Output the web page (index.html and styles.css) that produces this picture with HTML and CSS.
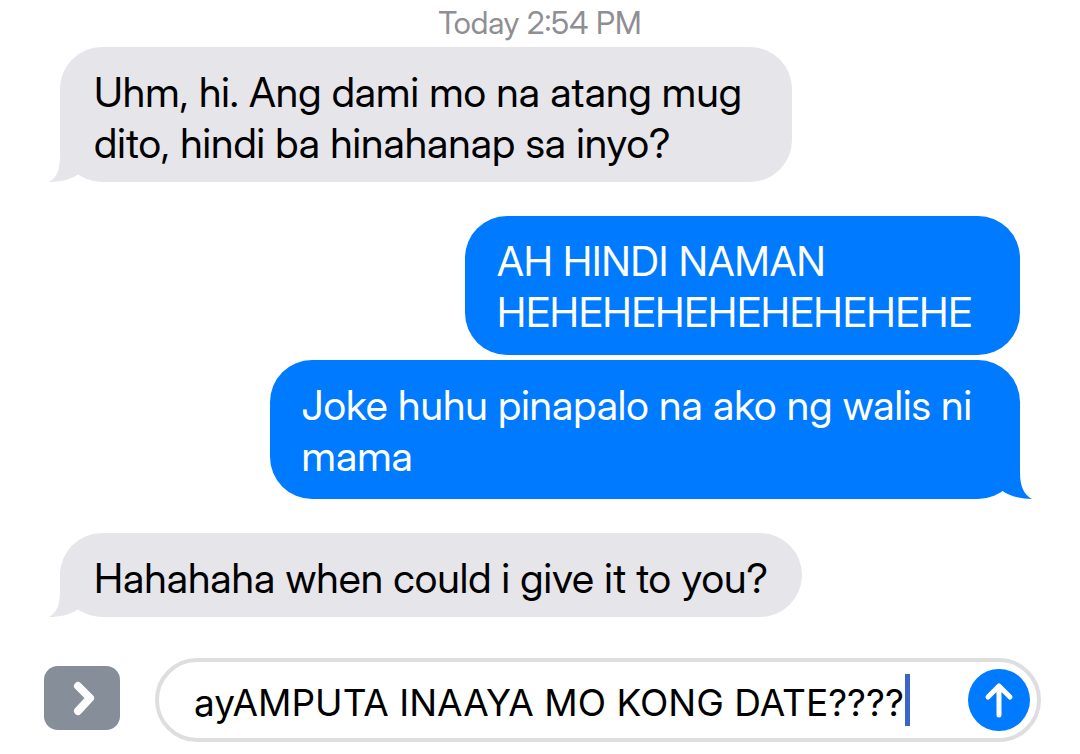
FILE: index.html
```html
<!DOCTYPE html>
<html lang="tl">
<head>
<meta charset="utf-8">
<meta name="viewport" content="width=device-width, initial-scale=1">
<title>Messages</title>
<link rel="stylesheet" href="styles.css">
</head>
<body>
<main class="chat">
  <time class="stamp">Today 2:54 PM</time>
  <section class="thread">
    <div class="bubble received multiline">
      <p>Uhm, hi. Ang dami mo na atang mug<br>dito, hindi ba hinahanap sa inyo?</p>
      <svg class="tail" viewBox="0 0 44 48" aria-hidden="true"><path d="M11 0V20C11 33 8 42 0 46C10 46 20 44 28 39L44 24V0Z"/></svg>
    </div>
    <div class="group">
      <div class="bubble sent"><p>AH HINDI NAMAN<br>HEHEHEHEHEHEHEHEHE</p></div>
      <div class="bubble sent">
        <p>Joke huhu pinapalo na ako ng walis ni<br>mama</p>
        <svg class="tail" viewBox="0 0 44 48" aria-hidden="true"><path d="M12 0V20C12 33 8 42 0 46C10 46 20 44 28 39L44 24V0Z"/></svg>
      </div>
    </div>
    <div class="bubble received">
      <p>Hahahaha when could i give it to you?</p>
      <svg class="tail" viewBox="0 0 44 48" aria-hidden="true"><path d="M11 0V20C11 33 8 42 0 46C10 46 20 44 28 39L44 24V0Z"/></svg>
    </div>
  </section>
  <form class="composer">
    <button class="expand" type="button" aria-label="Show apps">
      <svg viewBox="0 0 76 64" aria-hidden="true"><path d="M34 20L46 32L34 45"/></svg>
    </button>
    <div class="field">
      <input class="entry" type="text" aria-label="Message" value="ayAMPUTA INAAYA MO KONG DATE????">
      <span class="caret"></span>
      <button class="send" type="button" aria-label="Send">
        <svg viewBox="0 0 62 62" aria-hidden="true"><path d="M31 46V17M20 28L31 17L42 28"/></svg>
      </button>
    </div>
  </form>
</main>
</body>
</html>
```
FILE: styles.css
```css
* { box-sizing: border-box; }
body { margin: 0; background: #fff; color: #000; font-family: "Inter Display", Inter, "Liberation Sans", sans-serif; }
p { margin: 0; }
button { border: 0; padding: 0; }
.chat { display: flex; flex-direction: column; min-height: 100vh; }
.stamp { text-align: center; font-size: 31px; line-height: 36px; padding: 5px 0 6px; color: #8e8e93; }
.thread { display: flex; flex-direction: column; gap: 34px; padding: 0 60px; }
.group { display: flex; flex-direction: column; align-items: flex-end; gap: 5px; }
.bubble { position: relative; border-radius: 42px; font-size: 41px; line-height: 51px; }
.received { align-self: flex-start; padding: 20px 34px 13px 34px; background: #e5e5ea; }
.received.multiline { padding-right: 50px; }
.sent { padding: 20px 48px 17px 32px; background: #007aff; color: #fff; }
.tail { position: absolute; bottom: -2px; width: 44px; height: 48px; }
.received .tail { left: -11px; fill: #e5e5ea; }
.sent .tail { right: -12px; fill: #007aff; transform: scaleX(-1); }
.composer { display: flex; align-items: flex-start; gap: 35px; margin: 0; padding: 41px 39px 12px 44px; }
.expand { flex: none; width: 76px; height: 64px; margin-top: 8px; border-radius: 14px; background: #858e99; }
.expand svg, .send svg { display: block; fill: none; stroke: #fff; stroke-width: 5; stroke-linecap: round; stroke-linejoin: round; }
.expand svg { stroke-width: 8; }
.field { position: relative; flex: 1; display: flex; align-items: center; min-width: 0; height: 84px; padding: 0 7px 0 35px; border: 4px solid #dedee0; border-radius: 42px; }
.entry { flex: 1; min-width: 0; height: 60px; padding: 4px 0 0; border: 0; outline: 0; background: transparent; color: #000; font: 37px/51px Inter, "Liberation Sans", sans-serif; }
.caret { position: absolute; right: 127px; width: 5px; height: 52px; background: #3a66c8; }
.send { flex: none; width: 62px; height: 62px; border-radius: 50%; background: #007aff; }
```
